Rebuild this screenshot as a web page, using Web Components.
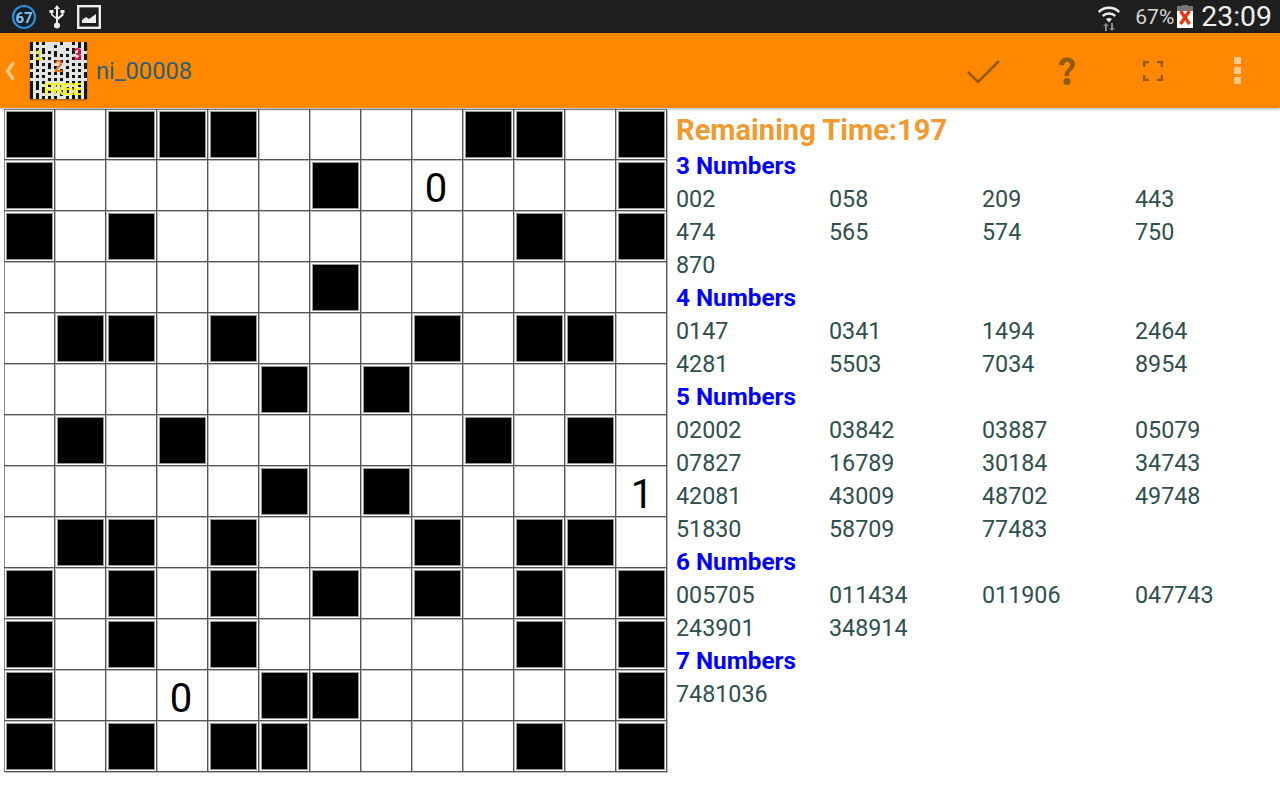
<!DOCTYPE html>
<html lang="en">

<head>
  <meta charset="UTF-8">
  <title>ni_00008</title>
  <style>
    html, body { margin: 0; height: 100%; background: #fff; overflow: hidden; }
    body { display: flex; flex-direction: column; width: 1280px; height: 800px; font-family: Roboto, sans-serif; }
    main { display: flex; align-items: flex-start; }
  </style>
</head>

<body>
  <status-bar></status-bar>
  <action-bar title-text="ni_00008"></action-bar>
  <main>
    <puzzle-board></puzzle-board>
    <number-panel></number-panel>
  </main>

  <script>
    // # = black cell, . = empty, digits are clues
    const BOARD = [
      "#.###....##.#",
      "#.....#.0...#",
      "#.#.......#.#",
      "......#......",
      ".##.#...#.##.",
      ".....#.#.....",
      ".#.#.....#.#.",
      ".....#.#....1",
      ".##.#...#.##.",
      "#.#.#.#.#.#.#",
      "#.#.#.....#.#",
      "#..0.##.....#",
      "#.#.##....#.#"
    ];

    // the launcher icon shows a bigger board, only roughly readable at this size
    const THUMB = [
      "#.#.#.....#...#.#.#",
      "#.......#.......#.#",
      "#.#.#.......#.#...#",
      "....#.#.#.....#.#..",
      "#.#.....#.#.#.....#",
      "#...#.#.......#.#.#",
      "..#.....#.#.#......",
      "#.#.#.#.......#.#.#",
      "#.....#.#...#.....#",
      "..#.#.....#...#.#..",
      "#.....#.#.#.#.....#",
      "#.#.#.......#.#.#.#",
      "......#.#.#........",
      "#.#.#.......#.#.#.#",
      "#.#...#.#.#.....#.#",
      "#.#.#.......#.#...#",
      "#...#.#.#.#.#...#.#",
      "#.#.......#...#.#.#",
      "#.#.#.#.#...#.#.#.#"
    ];

    const GROUPS = [
      ["3 Numbers", ["002", "058", "209", "443", "474", "565", "574", "750", "870"]],
      ["4 Numbers", ["0147", "0341", "1494", "2464", "4281", "5503", "7034", "8954"]],
      ["5 Numbers", ["02002", "03842", "03887", "05079", "07827", "16789", "30184", "34743", "42081", "43009", "48702", "49748", "51830", "58709", "77483"]],
      ["6 Numbers", ["005705", "011434", "011906", "047743", "243901", "348914"]],
      ["7 Numbers", ["7481036"]]
    ];

    class StatusBar extends HTMLElement {
      constructor() {
        super();
        this.attachShadow({ mode: 'open' });
        this.shadowRoot.innerHTML = `
          <style>
            :host { display: flex; align-items: center; height: 33px; background: #1f1f1f; flex: none; color: #e4e4e4; }
            .left { display: flex; align-items: center; gap: 11px; padding-left: 11px; }
            .right { margin-left: auto; display: flex; align-items: center; padding-right: 8px; }
            svg { display: block; }
            .pct { font-size: 21px; margin-left: 13px; color: #d6d6d6; }
            .time { font-size: 28.4px; margin-left: 8px; color: #eee; }
          </style>
          <div class="left">
            <svg width="26" height="26" viewBox="0 0 26 26">
              <circle cx="13" cy="13" r="11" fill="#10202c" stroke="#2b8fd8" stroke-width="2.2"/>
              <text x="13" y="18.5" text-anchor="middle" font-family="Roboto" font-weight="700" font-size="15" fill="#8cc4ec">67</text>
            </svg>
            <svg width="18" height="26" viewBox="0 0 18 26">
              <path d="M9 1l3 4H10v14H8V5H6zM8 15L3 11V9H1.500V6h4v3H4.500v1.500L8 13zM10 13l3.500-2.500V9h-1V6h4v3h-1v2.500L10 16z" fill="#eee"/>
              <circle cx="9" cy="21.500" r="3" fill="#eee"/>
            </svg>
            <svg width="24" height="24" viewBox="0 0 24 24">
              <rect x="1.200" y="1.200" width="21.600" height="21.600" fill="none" stroke="#eee" stroke-width="2.400"/>
              <path d="M5 18v-3l4-3 3 2 7-5v9z" fill="#eee"/>
            </svg>
          </div>
          <div class="right">
            <svg width="26" height="28" viewBox="0 0 26 28">
              <path d="M2 8a16 16 0 0 1 22 0l-1.500 2a13.500 13.500 0 0 0-19 0zM6 12a10.500 10.500 0 0 1 14 0l-1.500 2a8 8 0 0 0-11 0zM10 16a5 5 0 0 1 6 0l-3 3.500z" fill="#eee"/>
              <path d="M9 28v-5H7l3-3 3 3h-2v5zM15 20v5h-2l3 3 3-3h-2v-5z" fill="#8a8a8a"/>
            </svg>
            <span class="pct">67%</span>
            <svg width="16" height="23" viewBox="0 0 16 23" style="margin-left:3px">
              <path d="M5 0h6v1h5v5H0V1h5z" fill="#777"/>
              <rect y="6" width="16" height="17" fill="#fff"/>
              <path d="M3.500 6l9 13M12.500 6l-9 13" stroke="#e8350f" stroke-width="3.200" fill="none"/>
            </svg>
            <span class="time">23:09</span>
          </div>
        `;
      }
    }

    class ActionBar extends HTMLElement {
      constructor() {
        super();
        this.attachShadow({ mode: 'open' });
        const size = 57 / 19;
        let thumb = "";
        THUMB.forEach((row, y) => [...row].forEach((c, x) => {
          if (c === "#") thumb += `<rect x="${x * size}" y="${y * size}" width="${size}" height="${size}" fill="#151515"/>`;
        }));
        this.shadowRoot.innerHTML = `
          <style>
            :host { display: flex; align-items: center; height: 75px; background: #ff8800; flex: none; position: relative; z-index: 1; box-shadow: 0 1px 3px rgba(0,0,0,.35); }
            .back { width: 30px; flex: none; }
            .back svg { display: block; margin-left: 4px; }
            .logo { position: relative; width: 57px; height: 57px; flex: none; background: #e4e4e4; box-shadow: 0 1px 2px rgba(0,0,0,.4); overflow: hidden; }
            .logo svg { display: block; filter: blur(.5px); }
            .logo span { position: absolute; font-family: "Liberation Sans", sans-serif; line-height: 1; font-weight: 700; }
            .title { margin-left: 9px; font-size: 23.7px; color: #2b6077; }
            .actions { margin-left: auto; display: flex; align-items: center; }
            .actions div { width: 84px; height: 75px; display: flex; align-items: center; justify-content: center; }
            .actions svg { display: block; }
          </style>
          <div class="back">
            <svg width="12" height="20" viewBox="0 0 12 20"><path d="M9.500 1.500L3.500 10l6 8.500" fill="none" stroke="#ffc98a" stroke-width="3.500"/></svg>
          </div>
          <div class="logo">
            <svg width="57" height="57" viewBox="0 0 57 57">${thumb}</svg>
            <span style="left:5px;top:5px;font-size:15px;color:#e6e61e">1</span>
            <span style="left:24px;top:17px;font-size:16px;color:#e8731a">2</span>
            <span style="left:43px;top:5px;font-size:16px;color:#e01048">3</span>
            <span style="left:14px;top:40px;font-size:16px;letter-spacing:-1.100px;color:#f6f61a">FREE</span>
          </div>
          <span class="title">${this.getAttribute("title-text")}</span>
          <div class="actions">
            <div><svg width="34" height="26" viewBox="0 0 34 26" style="margin-right:5px"><path d="M2 14l10 10L33 3" fill="none" stroke="#8f5a12" stroke-width="2.500"/></svg></div>
            <div><svg width="20" height="30" viewBox="0 0 20 30" style="margin-right:4px"><path d="M2.500 8.500C3 4 6 2 10 2c4.500 0 7.500 2.500 7.500 6.500 0 5.500-6 5.500-6 11H8c0-6.500 5.500-6.500 5.500-11C13.500 6.500 12 5.500 10 5.500S7 6.800 6.700 9z" fill="#8f5a12" stroke="#8f5a12"/><circle cx="10" cy="25.500" r="3.500" fill="#8f5a12"/></svg></div>
            <div><svg width="20" height="20" viewBox="0 0 20 20"><path d="M1 6V1h5M14 1h5v5M19 14v5h-5M6 19H1v-5" fill="none" stroke="#8f5a12" stroke-width="2.500"/></svg></div>
            <div style="width:85px"><svg width="8" height="28" viewBox="0 0 8 28"><path d="M0 0h7v7H0zM0 10h7v7H0zM0 20h7v7H0z" fill="#ffc98a"/></svg></div>
          </div>
        `;
      }
    }

    class PuzzleBoard extends HTMLElement {
      constructor() {
        super();
        this.attachShadow({ mode: 'open' });
        const cells = BOARD.join("").split("").map((c) => {
          if (c === "#") return `<div class="cell"><i></i></div>`;
          if (c === ".") return `<div class="cell"></div>`;
          return `<div class="cell num d${c}">${c}</div>`;
        }).join("");
        this.shadowRoot.innerHTML = `
          <style>
            :host { display: block; margin: 1px 0 0 4px; flex: none; }
            .grid { display: grid; grid-template-columns: repeat(13, 51px); grid-auto-rows: 51px; width: 663px; box-shadow: inset 1px 1px 0 #888; }
            .cell { box-sizing: border-box; border-right: 1px solid #555; border-bottom: 1px solid #555; box-shadow: 1px 1px 0 #bbb; display: flex; align-items: flex-start; padding: 2px 0 0 2px; }
            .num { align-items: center; justify-content: center; padding: 7px 2px 0 0; font-size: 40px; color: #000; }
            .d1 { padding: 7px 0 0 2px; }
            i { display: block; width: 47px; height: 47px; box-sizing: border-box; background: #000; border: 1px solid #999; }
          </style>
          <div class="grid">${cells}</div>
        `;
      }
    }

    class NumberGroup extends HTMLElement {
      constructor() {
        super();
        this.attachShadow({ mode: 'open' });
        this.shadowRoot.innerHTML = `
          <style>
            :host { display: block; font-size: 23.3px; line-height: 33px; }
            h3 { margin: 0 0 2px; font: inherit; font-size: 24.3px; line-height: 31px; font-weight: 700; color: #0000ff; }
            .nums { display: grid; grid-template-columns: repeat(4, 153px); color: #2f4f4f; }
          </style>
          <h3><slot name="heading"></slot></h3>
          <div class="nums"><slot></slot></div>
        `;
      }
    }

    class NumberPanel extends HTMLElement {
      constructor() {
        super();
        this.attachShadow({ mode: 'open' });
        const groups = GROUPS.map(([name, nums]) =>
          `<number-group><span slot="heading">${name}</span>${nums.map((n) => `<span>${n}</span>`).join("")}</number-group>`
        ).join("");
        this.shadowRoot.innerHTML = `
          <style>
            :host { display: block; margin-left: 9px; padding-top: 5px; }
            .time { font-size: 29.100px; font-weight: 700; line-height: 35px; margin-bottom: 2px; color: #f09a30; }
          </style>
          <div class="time">Remaining Time:197</div>
          ${groups}
        `;
      }
    }

    customElements.define('status-bar', StatusBar);
    customElements.define('action-bar', ActionBar);
    customElements.define('puzzle-board', PuzzleBoard);
    customElements.define('number-group', NumberGroup);
    customElements.define('number-panel', NumberPanel);
  </script>
</body>

</html>
